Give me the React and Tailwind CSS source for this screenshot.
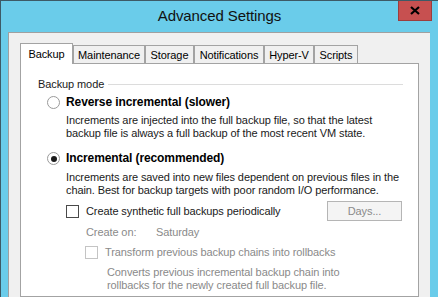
import React from 'react'

const font = { fontFamily: '"Liberation Sans", Arial, sans-serif' }

function Tab({ label, width, active }) {
  if (active) {
    return (
      <div
        className={`relative z-10 -mb-px h-[21px] ${width} flex items-center justify-center border border-b-0 border-[#a3a3a3] bg-white text-[11px] tracking-[-0.1px] text-black`}
      >
        {label}
      </div>
    )
  }
  return (
    <div
      className={`h-[18px] ${width} flex items-center justify-center border border-b-0 border-[#a3a3a3] bg-[#f0f0f0] pt-[2px] text-[11px] tracking-[-0.1px] text-black`}
    >
      {label}
    </div>
  )
}

function Radio({ checked }) {
  return (
    <div className="flex h-[13px] w-[13px] items-center justify-center rounded-full border border-[#9a9a9a] bg-white">
      {checked && <div className="h-[6px] w-[6px] rounded-full bg-[#1a1a1a]" />}
    </div>
  )
}

function Checkbox({ disabled }) {
  return (
    <div
      className={`h-[13px] w-[13px] shrink-0 border bg-white ${disabled ? 'border-[#c4c4c4]' : 'border-[#4a4a4a]'}`}
    />
  )
}

export default function App() {
  return (
    <div
      style={font}
      className="relative flex h-[297px] w-[438px] flex-col overflow-hidden border-l border-t border-[#3d5a66] bg-[#6accea]"
    >
      {/* title bar */}
      <div className="flex h-[31px] shrink-0 items-center justify-center pb-px text-[15px] tracking-[-0.1px] text-[#111]">
        Advanced Settings
      </div>
      <div className="absolute -top-px right-[6px] flex h-[21px] w-[34px] items-center justify-center border border-t-0 border-[#9c3d3d] bg-[#c75050]">
        <svg width="10" height="9" viewBox="0 0 10 9">
          <path d="M1 1 L9 8 M9 1 L1 8" stroke="#000" strokeWidth="2.2" />
        </svg>
      </div>

      {/* client area */}
      <div className="ml-[7px] mr-[8px] flex flex-1 flex-col border-l border-t border-[#a0a0a0] bg-[#f0f0f0] pl-[11px] pr-[11px] pt-[10px]">
        <div className="flex h-[20px] items-end">
          <Tab label="Backup" width="w-[53px]" active />
          <Tab label="Maintenance" width="w-[72px]" />
          <Tab label="Storage" width="w-[49px]" />
          <Tab label="Notifications" width="w-[70px]" />
          <Tab label="Hyper-V" width="w-[50px]" />
          <Tab label="Scripts" width="w-[44px]" />
        </div>

        <div className="flex-1 overflow-hidden border border-[#a3a3a3] bg-white pl-[17px] pr-[15px] text-[11px] leading-[13px] tracking-[-0.1px] text-[#1a1a1a]">
          {/* group header */}
          <div className="mt-[14px] flex h-[13px] items-center">
            <span>Backup mode</span>
            <div className="ml-[4px] mt-[-1px] h-px flex-1 bg-[#dcdcdc]" />
          </div>

          {/* reverse incremental */}
          <div className="ml-[9px] mt-[5px] flex h-[13px] items-center gap-[6px]">
            <Radio />
            <span className="text-[12px] font-bold tracking-[-0.1px] text-black">Reverse incremental (slower)</span>
          </div>
          <div className="ml-[28px] mt-[5px]">
            Increments are injected into the full backup file, so that the latest
            <br />
            backup file is always a full backup of the most recent VM state.
          </div>

          {/* incremental */}
          <div className="ml-[9px] mt-[12px] flex h-[13px] items-center gap-[6px]">
            <Radio checked />
            <span className="text-[12px] font-bold tracking-[-0.1px] text-black">Incremental (recommended)</span>
          </div>
          <div className="ml-[28px] mt-[6px]">
            Increments are saved into new files dependent on previous files in the
            <br />
            chain. Best for backup targets with poor random I/O performance.
          </div>

          <div className="ml-[28px] mt-[4px] flex h-[20px] items-center">
            <Checkbox />
            <span className="ml-[7px]">Create synthetic full backups periodically</span>
            <div className="ml-auto mr-px flex h-[20px] w-[75px] items-center justify-center border border-[#b5b5b5] bg-[#f4f4f4] text-[#8a8a8a]">
              Days...
            </div>
          </div>

          <div className="ml-[48px] mt-[5px] flex h-[13px] items-center text-[#8a8a8a]">
            <span className="w-[70px]">Create on:</span>
            <span>Saturday</span>
          </div>

          <div className="ml-[47px] mt-[7px] flex h-[13px] items-center text-[#8a8a8a]">
            <Checkbox disabled />
            <span className="ml-[7px]">Transform previous backup chains into rollbacks</span>
          </div>
          <div className="ml-[69px] mt-[7px] text-[#8a8a8a]">
            Converts previous incremental backup chain into
            <br />
            rollbacks for the newly created full backup file.
          </div>
        </div>
      </div>
    </div>
  )
}
